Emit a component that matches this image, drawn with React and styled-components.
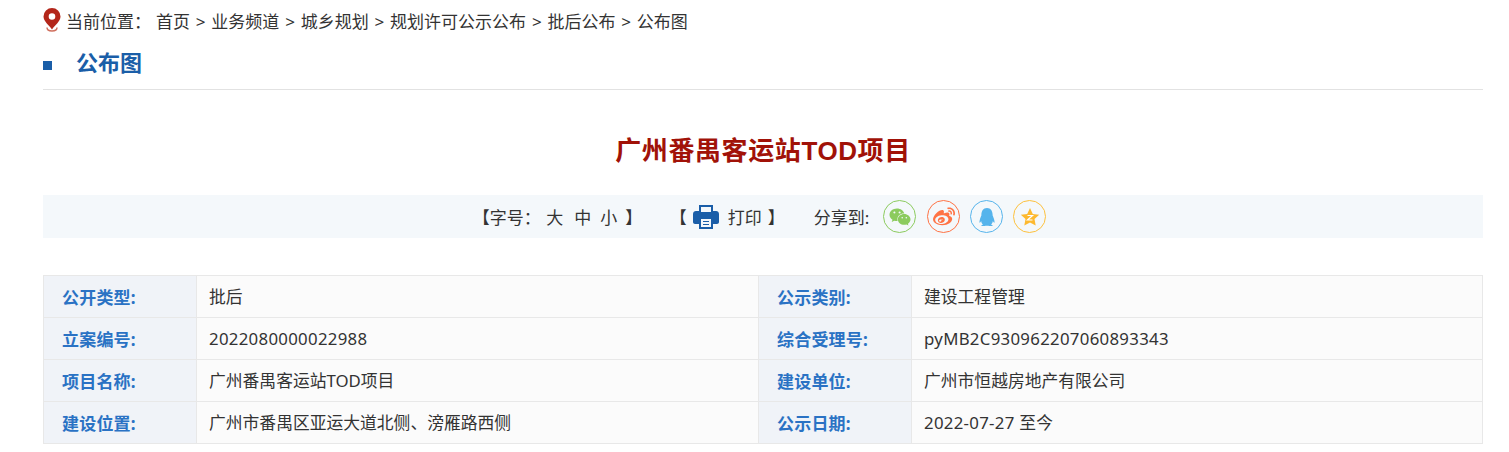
import React from 'react'
import styled, { createGlobalStyle } from 'styled-components'
import { FaWeixin, FaWeibo, FaQq } from 'react-icons/fa'

const Global = createGlobalStyle`
  html, body { margin: 0; padding: 0; background: #fff; }
  body { font-family: "Noto Sans", "Noto Sans CJK SC", sans-serif; color: #333; }
`
const Page = styled.div`
  width: 1440px; margin-left: 43px; height: 452px; overflow: hidden;
`
const Crumbs = styled.div`
  display: flex; align-items: center; height: 42px; box-sizing: border-box; padding-bottom: 2px;
  font-size: 17px; white-space: pre; word-spacing: 1.4px;
`
const Pin = styled.svg`
  width: 18px; height: 24px; margin-right: 5px; flex: none;
`
const Here = styled.span`
  margin-right: 5px;
`
const Heading = styled.div`
  display: flex; align-items: center; height: 38px; padding-bottom: 9px; border-bottom: 1px solid #e2e2e2;
  font-size: 22px; font-weight: bold; color: #1a5ea8;
`
const Square = styled.i`
  width: 9px; height: 9px; background: #1a5ea8; margin: 8px 24px 0 0;
`
const Title = styled.h1`
  margin: 0; height: 105px; padding-top: 11px; box-sizing: border-box; display: flex; align-items: center; justify-content: center;
  font-family: "Liberation Sans", "Noto Sans CJK SC", sans-serif;
  font-size: 26px; font-weight: bold; color: #a11208; letter-spacing: 0.6px;
`
const Tools = styled.div`
  height: 43px; padding-right: 7px; background: #f4f8fb; display: flex; align-items: center; justify-content: center;
  font-size: 17px; white-space: pre;
`
const Group = styled.span`
  display: flex; align-items: center; margin-right: ${p => p.$gap || 0}px;
`
const Size = styled.span`
  margin-left: ${p => p.$gap}px;
`
const Printer = styled.svg`
  width: 26px; height: 24px; margin: 0 9px 0 6px;
`
const Share = styled.span`
  width: 31px; height: 31px; border-radius: 50%; border: 1px solid ${p => p.$color}; color: ${p => p.$color};
  display: flex; align-items: center; justify-content: center; margin-left: ${p => p.$gap || 10}px; font-size: ${p => p.$size || 22}px;
`
const Table = styled.table`
  margin-top: 37px; width: 1439px; border-collapse: collapse; table-layout: fixed; font-size: 16.8px;
  border: 1px solid #e8e8e8;
`
const Label = styled.th`
  height: 42px; padding: 0 0 1px 18px; box-sizing: border-box; text-align: left; font-size: 17px; font-weight: bold; color: #2a72c4;
  letter-spacing: 0.2px; background: #f0f3f8; border: 1px solid #e8e8e8;
`
const Value = styled.td`
  height: 42px; padding: 0 0 1px 12px; box-sizing: border-box; color: #333; background: #fbfbfb; border: 1px solid #e8e8e8;
  letter-spacing: ${p => (p.$latin ? '0.3px' : 0)};
`

const rows = [
  ['公开类型:', '批后', '公示类别:', '建设工程管理'],
  ['立案编号:', '2022080000022988', '综合受理号:', 'pyMB2C930962207060893343'],
  ['项目名称:', '广州番禺客运站TOD项目', '建设单位:', '广州市恒越房地产有限公司'],
  ['建设位置:', '广州市番禺区亚运大道北侧、滂雁路西侧', '公示日期:', '2022-07-27 至今'],
]
const hasDigit = t => /\d/.test(t)

const App = () => (
  <Page>
    <Global />
    <Crumbs>
      <Pin viewBox="0 0 18 24">
        <path fill="#b3261a" fillRule="evenodd" d="M9 0a8.500 8.500 0 0 1 8.500 8.500C17.500 13.500 12 17 9 21.500 6 17 .5 13.500 .5 8.500A8.500 8.500 0 0 1 9 0zm0 5.200a3.300 3.300 0 1 0 0 6.600 3.300 3.300 0 0 0 0-6.600z" />
        <path fill="none" stroke="#d0705f" strokeWidth="1.500" d="M4 19.500c0 2.500 2.200 3.500 5 3.500s5-1 5-3.500" />
      </Pin>
      <Here>当前位置：</Here>
      首页 &gt; 业务频道 &gt; 城乡规划 &gt; 规划许可公示公布 &gt; 批后公布 &gt; 公布图
    </Crumbs>
    <Heading><Square />公布图</Heading>
    <Title>广州番禺客运站TOD项目</Title>
    <Tools>
      <Group $gap={27.5}>
        【字号：<Size $gap={5.5}>大</Size><Size $gap={11}>中</Size><Size $gap={9}>小</Size><Size $gap={8}>】</Size>
      </Group>
      <Group $gap={29}>
        【
        <Printer viewBox="0 0 26 24">
          <path fill="#1a5ea8" fillRule="evenodd" d="M6 0h14v6h3c1.700 0 3 1.300 3 3v8c0 1.100-.9 2-2 2h-4v5H6v-5H2c-1.100 0-2-.9-2-2V9c0-1.700 1.300-3 3-3h3V0zm2 2v5h10V2H8zm0 12v8h10v-8H8zm2 2h6v1h-6v-1zm0 3h6v1h-6v-1z" />
        </Printer>
        打印<Size $gap={6}>】</Size>
      </Group>
      <Group>
        分享到:
        <Share $color="#8ccb5e" $gap={14}><FaWeixin /></Share>
        <Share $color="#ff7345" $gap={11}><FaWeibo /></Share>
        <Share $color="#56b4ec" $size={18}><FaQq /></Share>
        <Share $color="#fdc13e">
          <svg width="20" height="20" viewBox="0 0 20 20">
            <path fill="#fdb92f" d="M10 1l2.800 5.900 6.400.8-4.700 4.400 1.200 6.400L10 15.400l-5.700 3.100 1.200-6.400L.8 7.700l6.400-.8z" />
            <path fill="none" stroke="#fff" strokeWidth="1.200" d="M7.500 8.500h5l-5 4.500h5" />
          </svg>
        </Share>
      </Group>
    </Tools>
    <Table>
      <colgroup>
        <col width="153" />
        <col width="562" />
        <col width="153" />
        <col width="571" />
      </colgroup>
      <tbody>
        {rows.map(r => (
          <tr key={r[0]}>
            <Label>{r[0]}</Label>
            <Value $latin={hasDigit(r[1])}>{r[1]}</Value>
            <Label>{r[2]}</Label>
            <Value $latin={hasDigit(r[3])}>{r[3]}</Value>
          </tr>
        ))}
      </tbody>
    </Table>
  </Page>
)

export default App
